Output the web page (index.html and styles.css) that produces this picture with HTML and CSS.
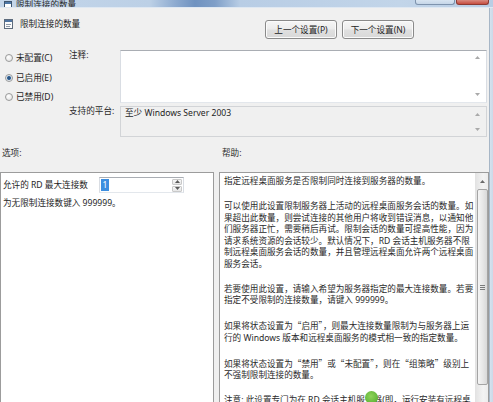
FILE: index.html
```html
<!DOCTYPE html>
<html lang="zh-CN">
<head>
<meta charset="utf-8">
<title>限制连接的数量</title>
<link rel="stylesheet" href="styles.css">
</head>
<body>
<div class="window">
  <div class="titlebar">
    <div class="title-left">
      <svg class="title-icon" width="8" height="8" viewBox="0 0 8 8"><rect x="0.5" y="0.5" width="7" height="7" fill="#fff" stroke="#3f5670"/><rect x="1" y="1" width="6" height="2" fill="#4d78a8"/></svg>
      <span class="title-text">限制连接的数量</span>
    </div>
    <div class="caption-buttons">
      <span class="cap-btn cap-minmax"></span>
      <span class="cap-btn cap-close"></span>
    </div>
  </div>
  <div class="frame">
    <div class="client">
      <div class="header">
        <div class="policy-title">
          <svg class="policy-icon" width="9" height="10" viewBox="0 0 9 10"><rect x="0.5" y="0.5" width="8" height="9" fill="#fbfbfb" stroke="#5d6b7c"/><rect x="1" y="1" width="7" height="2" fill="#4f74a0"/><path d="M2 5.5h5M2 7.5h4" stroke="#8d99a8"/></svg>
          <span>限制连接的数量</span>
        </div>
        <div class="nav-buttons">
          <button class="btn">上一个设置(P)</button>
          <button class="btn">下一个设置(N)</button>
        </div>
      </div>

      <div class="config">
        <div class="radios">
          <label class="radio"><span class="radio-dot"></span>未配置(C)</label>
          <label class="radio"><span class="radio-dot on"></span>已启用(E)</label>
          <label class="radio"><span class="radio-dot"></span>已禁用(D)</label>
        </div>
        <div class="field-label">注释:</div>
        <div class="textbox comment">
          <div class="vscroll">
            <svg width="5" height="3" viewBox="0 0 5 3"><path d="M0 3L2.5 0L5 3Z" fill="#a9a9a9"/></svg>
            <svg width="5" height="3" viewBox="0 0 5 3"><path d="M0 0L2.5 3L5 0Z" fill="#a9a9a9"/></svg>
          </div>
        </div>
        <div class="field-label">支持的平台:</div>
        <div class="textbox platform">
          <span class="platform-text">至少 Windows Server 2003</span>
          <div class="vscroll">
            <svg width="5" height="3" viewBox="0 0 5 3"><path d="M0 3L2.5 0L5 3Z" fill="#a9a9a9"/></svg>
            <svg width="5" height="3" viewBox="0 0 5 3"><path d="M0 0L2.5 3L5 0Z" fill="#a9a9a9"/></svg>
          </div>
        </div>
      </div>

      <div class="section-labels">
        <span class="sec-options">选项:</span>
        <span class="sec-help">帮助:</span>
      </div>

      <div class="panels">
        <div class="options">
          <div class="opt-row">
            <span class="opt-label">允许的 RD 最大连接数</span>
            <div class="spin">
              <span class="spin-value">1</span>
              <div class="spin-buttons">
                <span class="spin-btn"><svg width="5" height="3" viewBox="0 0 5 3"><path d="M0 3L2.5 0L5 3Z" fill="#5a5a5a"/></svg></span>
                <span class="spin-btn"><svg width="5" height="3" viewBox="0 0 5 3"><path d="M0 0L2.5 3L5 0Z" fill="#5a5a5a"/></svg></span>
              </div>
            </div>
          </div>
          <div class="opt-hint">为无限制连接数键入 999999。</div>
        </div>

        <div class="help">
          <div class="help-text">
            <p>指定远程桌面服务是否限制同时连接到服务器的数量。</p>
            <p>可以使用此设置限制服务器上活动的远程桌面服务会话的数量。如<br>果超出此数量，则尝试连接的其他用户将收到错误消息，以通知他<br>们服务器正忙，需要稍后再试。限制会话的数量可提高性能，因为<br>请求系统资源的会话较少。默认情况下，RD 会话主机服务器不限<br>制远程桌面服务会话的数量，并且管理远程桌面允许两个远程桌面<br>服务会话。</p>
            <p>若要使用此设置，请输入希望为服务器指定的最大连接数量。若要<br>指定不受限制的连接数量，请键入 999999。</p>
            <p>如果将状态设置为<span class="q">“</span>启用<span class="q">”</span>，则最大连接数量限制为与服务器上运<br>行的 Windows 版本和远程桌面服务的模式相一致的指定数量。</p>
            <p>如果将状态设置为<span class="q">“</span>禁用<span class="q">”</span>或<span class="q">“</span>未配置<span class="q">”</span>，则在<span class="q">“</span>组策略<span class="q">”</span>级别上<br>不强制限制连接的数量。</p>
            <p>注意: 此设置专门为在 RD 会话主机服务器(即，运行安装有远程桌</p>
            <span class="watermark"></span>
          </div>
          <div class="scrollbar">
            <span class="sb-arrow"><svg width="5" height="3" viewBox="0 0 5 3"><path d="M0 3L2.5 0L5 3Z" fill="#6a6a6a"/></svg></span>
            <span class="sb-thumb"><span class="grip"></span></span>
          </div>
        </div>
      </div>
    </div>
    <div class="rframe"></div>
  </div>
</div>
</body>
</html>
```

FILE: styles.css
```css
* { box-sizing: border-box; }

html, body {
  margin: 0;
  padding: 0;
}

body {
  width: 493px;
  height: 402px;
  overflow: hidden;
  background: #f0f0f0;
  font-family: "Noto Sans", "Noto Sans CJK SC", sans-serif;
  font-size: 8.6px;
  color: #1e1e1e;
}

.window {
  display: flex;
  flex-direction: column;
  height: 402px;
}

/* ---------- title bar (cut off at top) ---------- */
.titlebar {
  flex: none;
  height: 8px;
  display: flex;
  align-items: flex-end;
  overflow: hidden;
  background: linear-gradient(90deg, #c4d6ea 0, #bcd0e6 150px, #8eabd0 175px, #6f92c0 195px, #7f9fc8 215px, #b8cde5 240px, #c2d5e9 400px, #b9cde4 100%);
  border-bottom: 1px solid #dfe8f2;
}

.title-left {
  display: flex;
  align-items: center;
  gap: 4px;
  padding-left: 4px;
  height: 12px;
  line-height: 12px;
  margin-bottom: -4px;
  color: #2a2a2a;
}

.caption-buttons {
  display: flex;
  align-self: flex-start;
  margin-left: auto;
  margin-right: 4px;
  gap: 1px;
}

.cap-btn {
  display: block;
  height: 5px;
  border: 1px solid #7e93ad;
  border-top: none;
  border-radius: 0 0 3px 3px;
}

.cap-minmax {
  width: 40px;
  background: linear-gradient(#d8e4f1, #c6d6e8);
}

.cap-close {
  width: 33px;
  border-color: #8d3a33;
  background: linear-gradient(#d98a80, #c64d40);
}

/* ---------- frame ---------- */
.frame {
  flex: 1;
  display: flex;
  min-height: 0;
}

.client {
  flex: 1;
  min-width: 0;
  display: flex;
  flex-direction: column;
}

.rframe {
  flex: none;
  width: 4px;
  background: linear-gradient(90deg, #a7b6c6 0, #a7b6c6 1px, #d6e2ee 1px, #cbd9e8 100%);
}

/* ---------- header ---------- */
.header {
  flex: none;
  height: 42px;
  display: flex;
  align-items: flex-start;
}

.policy-title {
  display: flex;
  align-items: center;
  gap: 7px;
  margin: 10px 0 0 4px;
  height: 12px;
  line-height: 12px;
}

.policy-icon {
  display: block;
}

.nav-buttons {
  display: flex;
  gap: 5px;
  margin: 12px 75px 0 auto;
}

.btn {
  width: 72px;
  height: 19px;
  padding: 0;
  font-family: inherit;
  font-size: 8.6px;
  color: #1e1e1e;
  border: 1px solid #8a8a8a;
  border-radius: 3px;
  background: linear-gradient(#f6f6f6 0%, #ececec 48%, #e0e0e0 52%, #d8d8d8 100%);
  box-shadow: inset 0 0 0 1px #fbfbfb;
}

/* ---------- configuration area ---------- */
.config {
  flex: none;
  display: grid;
  grid-template-columns: 69px 51px 367px;
  grid-template-rows: 53px 31px;
  row-gap: 3px;
}

.radios {
  grid-row: 1 / span 2;
  display: flex;
  flex-direction: column;
  gap: 7.5px;
  padding: 2px 0 0 5px;
}

.radio {
  display: flex;
  align-items: center;
  gap: 3px;
  height: 12px;
  line-height: 12px;
}

.radio-dot {
  width: 8px;
  height: 8px;
  border-radius: 50%;
  border: 1px solid #9a9b9b;
  background: radial-gradient(circle at 40% 35%, #ffffff, #dedede);
}

.radio-dot.on {
  background: radial-gradient(circle, #24466e 0, #3a6a9c 1.6px, #dfe6ee 2.4px, #f4f4f4 100%);
}

.field-label {
  line-height: 10px;
  color: #2a2a2a;
}

.textbox {
  display: flex;
  border: 1px solid;
}

.comment {
  background: #ffffff;
  border-color: #a9adb3 #d9dde3 #e3e7ec #d9dde3;
}

.platform {
  background: #f0f0f0;
  border-color: #d2d4d7;
}

.platform-text {
  flex: 1;
  padding-left: 4px;
  line-height: 12px;
}

.vscroll {
  flex: none;
  margin-left: auto;
  width: 17px;
  display: flex;
  flex-direction: column;
  justify-content: space-between;
  align-items: center;
}

.comment .vscroll {
  padding: 5px 0 6px;
}

.platform .vscroll {
  padding: 6px 0 5px;
}

.vscroll svg {
  display: block;
}

/* ---------- section labels ---------- */
.section-labels {
  flex: none;
  height: 35px;
  display: grid;
  grid-template-columns: 219px 1fr;
  padding-top: 10px;
  line-height: 12px;
  color: #2a2a2a;
}

.sec-options {
  padding-left: 2px;
}

.sec-help {
  padding-left: 3px;
}

/* ---------- panels ---------- */
.panels {
  flex: none;
  height: 240px;
  display: grid;
  grid-template-columns: 214px 270px;
  column-gap: 5px;
}

.options {
  background: #ffffff;
  border: 1px solid #9c9c9c;
  padding: 4px 0 0 2px;
}

.opt-row {
  display: flex;
  align-items: center;
  height: 16px;
}

.opt-label {
  flex: none;
  width: 96px;
  line-height: 12px;
  white-space: nowrap;
}

.spin {
  width: 85px;
  height: 16px;
  display: flex;
  align-items: center;
  padding-left: 1px;
  background: #ffffff;
  border: 1px solid;
  border-color: #a9adb3 #d9dde3 #e3e7ec #d9dde3;
}

.spin-value {
  line-height: 12px;
  padding: 0 1.5px;
  background: #3d8ee0;
  color: #ffffff;
}

.spin-buttons {
  margin-left: auto;
  margin-right: 1px;
  width: 10px;
  height: 13px;
  display: flex;
  flex-direction: column;
  gap: 1px;
}

.spin-btn {
  flex: 1;
  display: flex;
  align-items: center;
  justify-content: center;
  border: 1px solid #c9c9c9;
  border-radius: 1px;
  background: linear-gradient(#f7f7f7, #e6e6e6);
}

.spin-btn svg {
  display: block;
}

.opt-hint {
  margin-top: 4px;
  line-height: 12px;
}

.help {
  display: flex;
  background: #ffffff;
  border: 1px solid #9c9c9c;
  min-width: 0;
}

.help-text {
  position: relative;
  flex: 1;
  min-width: 0;
  overflow: hidden;
  padding: 3px 2px 0 4px;
  line-height: 11.5px;
  white-space: nowrap;
  color: #2a2a2a;
}

.help-text p {
  margin: 0 0 13.5px;
}

.q {
  font-family: "Noto Sans CJK SC", sans-serif;
  font-feature-settings: "fwid" 1;
}

.watermark {
  position: absolute;
  left: 145px;
  top: 218px;
  width: 13px;
  height: 13px;
  border-radius: 50%;
  background: radial-gradient(circle at 45% 40%, #8fd35a, #4fa82a);
}

.scrollbar {
  flex: none;
  width: 13px;
  display: flex;
  flex-direction: column;
  align-items: center;
  border-left: 1px solid #e3e3e3;
  background: linear-gradient(90deg, #e4e4e4, #f3f3f3 60%, #ececec);
}

.sb-arrow {
  flex: none;
  height: 16px;
  display: flex;
  align-items: center;
  justify-content: center;
}

.sb-arrow svg {
  display: block;
}

.sb-thumb {
  width: 11px;
  height: 196px;
  display: flex;
  align-items: center;
  justify-content: center;
  border: 1px solid #a4a4a4;
  border-radius: 2px;
  background: linear-gradient(90deg, #f5f5f5, #e8e8e8 50%, #d9d9d9);
}

.grip {
  width: 5px;
  height: 5px;
  background: repeating-linear-gradient(#7a7a7a 0, #7a7a7a 1px, transparent 1px, transparent 2px);
}
```
